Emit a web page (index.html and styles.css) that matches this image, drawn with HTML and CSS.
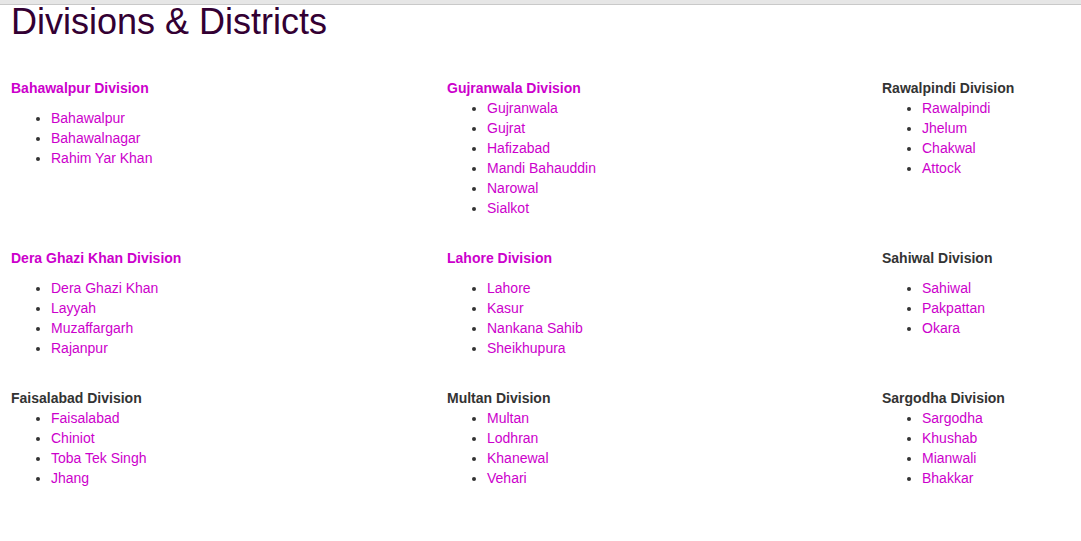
FILE: index.html
```html
<!DOCTYPE html>
<html>
<head>
<meta charset="utf-8">
<title>Divisions &amp; Districts</title>
<link rel="stylesheet" href="styles.css">
</head>
<body>
<div class="topbar"></div>
<h1 class="title">Divisions &amp; Districts</h1>
<div class="grid">
  <section class="division">
    <h3 class="div-name accent">Bahawalpur Division</h3>
    <ul class="districts spaced">
      <li>Bahawalpur</li>
      <li>Bahawalnagar</li>
      <li>Rahim Yar Khan</li>
    </ul>
  </section>
  <section class="division">
    <h3 class="div-name accent">Gujranwala Division</h3>
    <ul class="districts">
      <li>Gujranwala</li>
      <li>Gujrat</li>
      <li>Hafizabad</li>
      <li>Mandi Bahauddin</li>
      <li>Narowal</li>
      <li>Sialkot</li>
    </ul>
  </section>
  <section class="division">
    <h3 class="div-name">Rawalpindi Division</h3>
    <ul class="districts">
      <li>Rawalpindi</li>
      <li>Jhelum</li>
      <li>Chakwal</li>
      <li>Attock</li>
    </ul>
  </section>
  <section class="division">
    <h3 class="div-name accent">Dera Ghazi Khan Division</h3>
    <ul class="districts spaced">
      <li>Dera Ghazi Khan</li>
      <li>Layyah</li>
      <li>Muzaffargarh</li>
      <li>Rajanpur</li>
    </ul>
  </section>
  <section class="division">
    <h3 class="div-name accent">Lahore Division</h3>
    <ul class="districts spaced">
      <li>Lahore</li>
      <li>Kasur</li>
      <li>Nankana Sahib</li>
      <li>Sheikhupura</li>
    </ul>
  </section>
  <section class="division">
    <h3 class="div-name">Sahiwal Division</h3>
    <ul class="districts spaced">
      <li>Sahiwal</li>
      <li>Pakpattan</li>
      <li>Okara</li>
    </ul>
  </section>
  <section class="division">
    <h3 class="div-name">Faisalabad Division</h3>
    <ul class="districts">
      <li>Faisalabad</li>
      <li>Chiniot</li>
      <li>Toba Tek Singh</li>
      <li>Jhang</li>
    </ul>
  </section>
  <section class="division">
    <h3 class="div-name">Multan Division</h3>
    <ul class="districts">
      <li>Multan</li>
      <li>Lodhran</li>
      <li>Khanewal</li>
      <li>Vehari</li>
    </ul>
  </section>
  <section class="division">
    <h3 class="div-name">Sargodha Division</h3>
    <ul class="districts">
      <li>Sargodha</li>
      <li>Khushab</li>
      <li>Mianwali</li>
      <li>Bhakkar</li>
    </ul>
  </section>
</div>
</body>
</html>
```
FILE: styles.css
```css
html, body {
  margin: 0;
  padding: 0;
  background: #ffffff;
}
body {
  font-family: "Liberation Sans", Arial, sans-serif;
  color: #333333;
}
.topbar {
  height: 4px;
  background: #e6e6e6;
  border-bottom: 1px solid #c9c9c9;
}
.title {
  margin: 0;
  padding-left: 11px;
  font-size: 36px;
  line-height: 34px;
  font-weight: normal;
  color: #330033;
}
.grid {
  display: grid;
  grid-template-columns: 436px 435px 1fr;
  row-gap: 30px;
  margin-top: 39px;
  padding-left: 11px;
}
.div-name {
  margin: 0;
  font-size: 14px;
  line-height: 20px;
  font-weight: bold;
  color: #333333;
}
.div-name.accent {
  color: #cc00cc;
}
.districts {
  margin: 0;
  padding-left: 40px;
  font-size: 14px;
  line-height: 20px;
  color: #333333;
}
.districts.spaced {
  margin-top: 10px;
}
.districts li {
  color: #333333;
}
.districts li::marker {
  color: #333333;
}
.districts li {
  color: #cc00cc;
}
```
